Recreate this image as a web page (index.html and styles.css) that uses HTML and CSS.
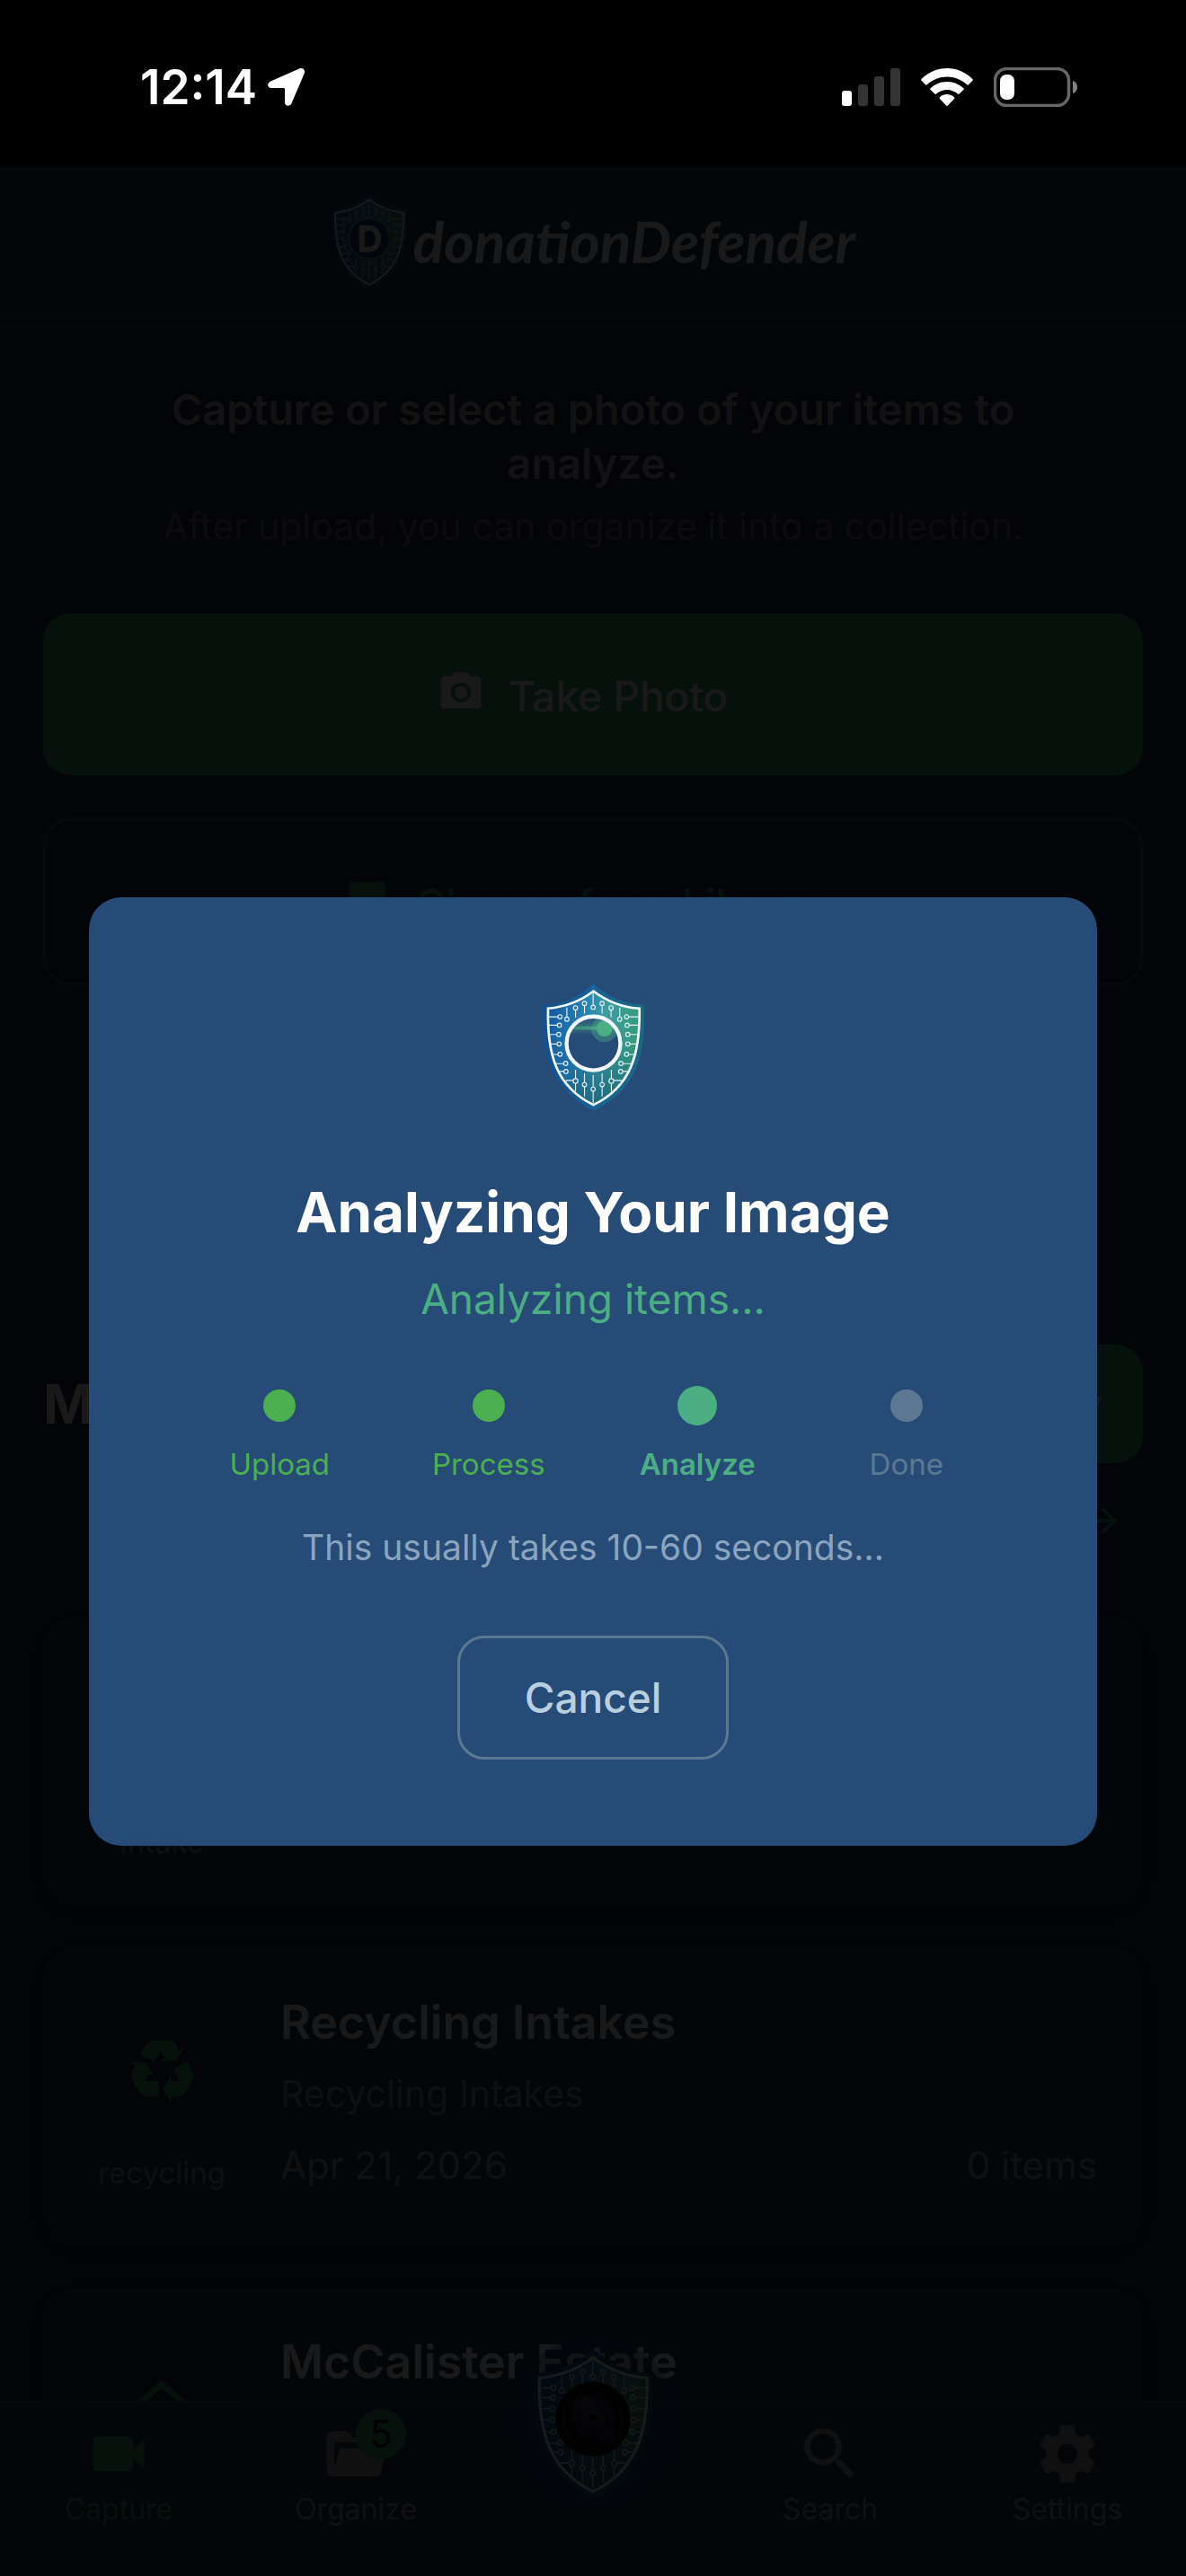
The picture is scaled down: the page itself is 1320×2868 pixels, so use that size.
FILE: index.html
```html
<!DOCTYPE html>
<html lang="en">
<head>
<meta charset="utf-8">
<meta name="viewport" content="width=device-width, initial-scale=1">
<title>donationDefender</title>
<link rel="stylesheet" href="styles.css">
</head>
<body>
<svg class="defs" aria-hidden="true">
  <defs>
    <linearGradient id="rim" x1="0" x2="1"><stop offset="0" stop-color="#14508f"/><stop offset=".5" stop-color="#17639a"/><stop offset="1" stop-color="#1a6a80"/></linearGradient>
    <linearGradient id="plate" x1="0" y1=".2" x2="1" y2=".4"><stop offset="0" stop-color="#1459a3"/><stop offset=".4" stop-color="#2784b4"/><stop offset=".6" stop-color="#3c9da4"/><stop offset="1" stop-color="#359a78"/></linearGradient>
    <linearGradient id="shade" x1="0" y1="0" x2="0" y2="1"><stop offset=".45" stop-color="#0a4a7c" stop-opacity="0"/><stop offset="1" stop-color="#0c4c70" stop-opacity=".65"/></linearGradient>
    <linearGradient id="scan" x1="0" x2="1"><stop offset="0" stop-color="#4caf84" stop-opacity=".35"/><stop offset="1" stop-color="#4caf84" stop-opacity=".9"/></linearGradient>
    <linearGradient id="scanband" x1="0" y1="0" x2="0" y2="1"><stop offset="0" stop-color="#4caf84" stop-opacity="0"/><stop offset=".6" stop-color="#4caf84" stop-opacity=".4"/><stop offset="1" stop-color="#4caf84" stop-opacity="0"/></linearGradient>
    <radialGradient id="glass" cx=".5" cy=".45"><stop offset="0" stop-color="#2a7a78"/><stop offset=".35" stop-color="#2a3540"/><stop offset=".65" stop-color="#241a38"/><stop offset="1" stop-color="#0c0c10"/></radialGradient>
    <clipPath id="ringclip"><circle cx="301" cy="280" r="83"/></clipPath>
    <mask id="hole"><rect x="100" y="60" width="400" height="470" fill="#fff"/><circle cx="301" cy="280" r="90" fill="#000"/></mask>
    <symbol id="shield" viewBox="128 80 346 426">
      <g mask="url(#hole)">
        <path fill="url(#rim)" d="M301 80C350 125 405 148 470 150C478 320 445 435 303 505C160 435 122 320 131 150C198 148 255 125 301 80Z"/>
        <path fill="url(#plate)" d="M301 105C345 138 400 160 455 163C458 320 425 425 301 486C178 425 145 320 149 163C205 158 258 138 301 105Z"/>
        <path fill="url(#shade)" d="M301 105C345 138 400 160 455 163C458 320 425 425 301 486C178 425 145 320 149 163C205 158 258 138 301 105Z"/>
        <g fill="none" stroke="#e4f2f5" stroke-width="3.4">
          <path d="M300 110V152M271 153V180M241 168V194M212 160V192M330 153V180M360 168V192M389 160V192M150 191H182M152 219H180M152 250H178M154 282H179M160 317H182M172 348H201M184 374H202M210 404H232M452 191H419M451 219H421M451 250H423M450 282H423M445 317H419M432 348H400M420 374H400M394 404H369M241 368V398M241 413V440M271 380V410M271 425V458M300 386V425M300 440V480M330 380V410M330 425V458M361 368V398M361 413V440"/>
          <path d="M206 410l6-6M398 410l-6-6"/>
          <g>
            <circle cx="300" cy="159" r="7"/><circle cx="271" cy="146" r="7"/><circle cx="241" cy="161" r="7"/><circle cx="212" cy="199" r="7"/><circle cx="330" cy="146" r="7"/><circle cx="360" cy="161" r="7"/><circle cx="389" cy="199" r="7"/>
            <circle cx="189" cy="191" r="7"/><circle cx="187" cy="219" r="7"/><circle cx="185" cy="250" r="7"/><circle cx="186" cy="282" r="7"/><circle cx="189" cy="316" r="7"/><circle cx="208" cy="347" r="7"/><circle cx="209" cy="374" r="7"/>
            <circle cx="412" cy="191" r="7"/><circle cx="414" cy="219" r="7"/><circle cx="416" cy="250" r="7"/><circle cx="416" cy="282" r="7"/><circle cx="412" cy="316" r="7"/><circle cx="393" cy="347" r="7"/><circle cx="392" cy="374" r="7"/>
            <circle cx="241" cy="406" r="8"/><circle cx="271" cy="418" r="7"/><circle cx="300" cy="433" r="7"/><circle cx="330" cy="418" r="7"/><circle cx="361" cy="406" r="8"/>
          </g>
        </g>
        <path fill="none" stroke="#f4fafc" stroke-width="8" d="M301 105C345 138 400 160 455 163C458 320 425 425 301 486C178 425 145 320 149 163C205 158 258 138 301 105Z"/>
      </g>
    </symbol>
  </defs>
</svg>

<div class="status">
  <div class="status-left">
    <span>12:14</span>
    <svg width="42" height="44" viewBox="0 0 42 44" fill="#fff"><path d="M3.200 15.500L35 1.400C39 -.3 42.300 3 40.600 7L26.500 40C25 44 19 43.500 19 39V24.500C19 23.500 18.500 23 17.500 23H4C-.8 23-1 17.500 3.200 15.500Z"/></svg>
  </div>
  <div class="status-right">
    <svg width="65" height="42" viewBox="0 0 65 42"><rect x="0" y="25" width="11" height="17" rx="3" fill="#fff"/><g fill="#333"><rect x="18" y="18" width="11" height="24" rx="3"/><rect x="36" y="9" width="11" height="33" rx="3"/><rect x="54" y="0" width="11" height="42" rx="3"/></g></svg>
    <svg width="58" height="43" viewBox="0 0 58 43" fill="#fff"><path d="M29 0C40 0 50 4.500 57.400 12C58 12.600 58 13.200 57.400 13.800L53 18.300C52.500 18.800 51.900 18.800 51.300 18.300C45 12.500 37 9.500 29 9.500S13 12.500 6.700 18.300C6.100 18.800 5.500 18.800 5 18.300L.6 13.800C0 13.200 0 12.600.6 12C8 4.500 18 0 29 0Z"/><path d="M29 15C36.500 15 42.500 17.800 47.400 22.200C48 22.800 48 23.400 47.400 24L42.600 28.500C42 29 41.500 29 40.900 28.500C37.500 25.500 33.500 24 29 24S20.500 25.500 17.100 28.500C16.500 29 16 29 15.400 28.500L10.600 24C10 23.400 10 22.800 10.600 22.200C15.500 17.800 21.500 15 29 15Z"/><path d="M29 29C32 29 34.800 30.200 37 32.200C37.600 32.800 37.500 33.400 37 34L29.900 41.500C29.300 42.100 28.700 42.100 28.100 41.500L21 34C20.500 33.400 20.400 32.800 21 32.200C23.200 30.200 26 29 29 29Z"/></svg>
    <svg width="94" height="44" viewBox="0 0 94 44"><rect x="1.500" y="1.500" width="82" height="41" rx="13" fill="none" stroke="#666" stroke-width="3.500"/><rect x="7" y="8" width="16" height="28" rx="7" fill="#fff"/><path fill="#808080" d="M88 15C91.500 16 93 19 93 22S91.500 28 88 29Z"/></svg>
  </div>
</div>

<div class="stage">
  <div class="app">
    <header class="topbar">
      <svg class="logo-mark" viewBox="128 80 346 426"><use href="#shield" x="128" y="80" width="346" height="426"/><circle cx="301" cy="280" r="92" fill="#123f78" stroke="#5fae9c" stroke-width="10"/><path d="M268 232H300C355 232 355 328 300 328H268Z" fill="none" stroke="#fff" stroke-width="24"/></svg>
      <span class="wordmark">donationDefender</span>
    </header>

    <main class="content">
      <section class="intro">
        <h1>Capture or select a photo of your items to analyze.</h1>
        <p>After upload, you can organize it into a collection.</p>
      </section>
      <div class="actions">
        <button class="btn btn-primary" type="button"><svg class="btn-icon" viewBox="0 0 24 24"><path fill-rule="evenodd" d="M9 2L7.200 4H4C2.900 4 2 4.900 2 6V18C2 19.100 2.900 20 4 20H20C21.100 20 22 19.100 22 18V6C22 4.900 21.100 4 20 4H16.800L15 2ZM12 7A5 5 0 1 1 12 17A5 5 0 1 1 12 7ZM12 8.800A3.200 3.200 0 1 0 12 15.200A3.200 3.200 0 1 0 12 8.800Z"/></svg>Take Photo</button>
        <button class="btn btn-outline" type="button"><svg class="btn-icon" viewBox="0 0 24 24"><path d="M21 19V5C21 3.900 20.100 3 19 3H5C3.900 3 3 3.900 3 5V19C3 20.100 3.900 21 5 21H19C20.100 21 21 20.100 21 19M8.500 13.500L11 16.500L14.500 12L19 18H5L8.500 13.500Z"/></svg>Choose from Library</button>
      </div>

      <section class="collections">
        <div class="collections-head">
          <h2>My Collections</h2>
          <button class="btn-new" type="button">+ New</button>
        </div>
        <a class="more" href="#all">View all <svg width="36" height="32" viewBox="0 0 36 32"><path d="M2 16H33M20 4L33 16L20 28" fill="none" stroke="currentColor" stroke-width="4" stroke-linecap="round" stroke-linejoin="round"/></svg></a>

        <div class="cards">
          <article class="card">
            <div class="tag"><div class="thumb"></div><span>Intake</span></div>
          </article>
          <article class="card">
            <div class="tag">
              <div class="thumb"><svg viewBox="0 0 24 24"><path d="M21.820,15.420L19.320,19.750C18.830,20.610 17.920,21.060 17,21H15V23L12.500,18.500L15,14V16H17.820L15.600,12.150L19.930,9.650L21.730,12.770C22.250,13.540 22.320,14.570 21.820,15.420M9.210,3.060H14.210C15.190,3.060 16.040,3.630 16.450,4.450L17.450,6.190L19.180,5.190L16.540,9.600L11.390,9.690L13.120,8.690L11.710,6.240L9.500,10.090L5.160,7.590L6.960,4.470C7.370,3.640 8.220,3.060 9.210,3.060M5.050,19.760L2.550,15.430C2.060,14.580 2.130,13.560 2.640,12.790L3.640,11.060L1.910,10.060L7.050,10.140L9.700,14.560L7.970,13.560L6.560,16H11V21H7.400C6.470,21.070 5.550,20.610 5.050,19.760Z"/></svg></div>
              <span>recycling</span>
            </div>
            <div class="info">
              <h3>Recycling Intakes</h3>
              <p class="desc">Recycling Intakes</p>
              <div class="meta"><span>Apr 21, 2026</span><span>0 items</span></div>
            </div>
          </article>
          <article class="card">
            <div class="tag">
              <div class="thumb"><svg viewBox="0 0 24 24"><path d="M12 5.690L17 10.190V18H15V12H9V18H7V10.190L12 5.690M12 3L2 12H5V20H11V14H13V20H19V12H22L12 3Z"/></svg></div>
            </div>
            <div class="info"><h3>McCalister Estate</h3></div>
          </article>
        </div>
      </section>
    </main>

    <nav class="tabs">
      <a class="tab active" href="#capture"><svg viewBox="0 0 24 24"><path d="M17 10.500V7C17 6.450 16.550 6 16 6H4C3.450 6 3 6.450 3 7V17C3 17.550 3.450 18 4 18H16C16.550 18 17 17.550 17 17V13.500L21 17.500V6.500L17 10.500Z"/></svg>Capture</a>
      <a class="tab" href="#organize"><span class="icon-wrap"><svg viewBox="0 0 24 24"><path d="M3.800 4H8.800L11 6.200H19.500C20.600 6.200 21.400 7 21.400 8H4.500V17L6.300 10H22.500L21 18.500C20.800 19.400 20.200 20 19.300 20H3.800C2.700 20 1.800 19.100 1.800 18V6C1.800 4.900 2.700 4 3.800 4Z"/></svg><span class="badge">5</span></span>Organize</a>
      <a class="tab-center" href="#camera" aria-label="Camera"><svg viewBox="128 80 346 426"><use href="#shield" x="128" y="80" width="346" height="426"/><circle cx="301" cy="280" r="106" fill="#0c0c0e"/><circle cx="301" cy="280" r="84" fill="none" stroke="#2b2b33" stroke-width="5"/><circle cx="301" cy="280" r="78" fill="url(#glass)"/><circle cx="301" cy="275" r="50" fill="none" stroke="#34404a" stroke-width="4"/><ellipse cx="275" cy="235" rx="34" ry="22" fill="#8a6a80" opacity=".35"/><ellipse cx="345" cy="325" rx="28" ry="16" fill="#3a2c8c" opacity=".6" transform="rotate(-35 345 325)"/><circle cx="301" cy="275" r="12" fill="#070709"/></svg></a>
      <a class="tab" href="#search"><svg viewBox="0 0 24 24"><path d="M9.500 3A6.500 6.500 0 0 1 16 9.500C16 11.110 15.410 12.590 14.440 13.730L14.710 14H15.500L20.500 19L19 20.500L14 15.500V14.710L13.730 14.440C12.590 15.410 11.110 16 9.500 16A6.500 6.500 0 0 1 9.500 3M9.500 5C7 5 5 7 5 9.500S7 14 9.500 14S14 12 14 9.500S12 5 9.500 5Z"/></svg>Search</a>
      <a class="tab" href="#settings"><svg viewBox="0 0 24 24"><path d="M12 15.500A3.500 3.500 0 1 1 12 8.500A3.500 3.500 0 0 1 12 15.500M19.430 12.970C19.470 12.650 19.500 12.330 19.500 12S19.470 11.340 19.430 11L21.540 9.370C21.730 9.220 21.780 8.950 21.660 8.730L19.660 5.270C19.540 5.050 19.270 4.960 19.050 5.050L16.560 6.050C16.040 5.660 15.500 5.320 14.870 5.070L14.500 2.420C14.460 2.180 14.250 2 14 2H10C9.750 2 9.540 2.180 9.500 2.420L9.130 5.070C8.500 5.320 7.960 5.660 7.440 6.050L4.950 5.050C4.730 4.960 4.460 5.050 4.340 5.270L2.340 8.730C2.210 8.950 2.270 9.220 2.460 9.370L4.570 11C4.530 11.340 4.500 11.670 4.500 12S4.530 12.650 4.570 12.970L2.460 14.630C2.270 14.780 2.210 15.050 2.340 15.270L4.340 18.730C4.460 18.950 4.730 19.030 4.950 18.950L7.440 17.940C7.960 18.340 8.500 18.680 9.130 18.930L9.500 21.580C9.540 21.820 9.750 22 10 22H14C14.250 22 14.460 21.820 14.500 21.580L14.870 18.930C15.500 18.670 16.040 18.340 16.560 17.940L19.050 18.950C19.270 19.030 19.540 18.950 19.660 18.730L21.660 15.270C21.780 15.050 21.730 14.780 21.540 14.630L19.430 12.970Z"/></svg>Settings</a>
    </nav>
  </div>

  <div class="backdrop">
    <section class="modal" role="dialog" aria-modal="true" aria-labelledby="modal-title">
      <svg class="modal-mark" viewBox="128 80 346 426">
        <use href="#shield" x="128" y="80" width="346" height="426"/>
        <g clip-path="url(#ringclip)">
          <rect x="218" y="190" width="166" height="62" fill="url(#scanband)"/>
          <rect x="218" y="223" width="120" height="11" fill="url(#scan)"/>
          <circle cx="338" cy="232" r="44" fill="#4caf84" opacity=".4"/>
          <circle cx="338" cy="230" r="27" fill="#4caf84"/>
        </g>
        <circle cx="301" cy="280" r="90" fill="none" stroke="#f2f7fa" stroke-width="13"/>
      </svg>
      <h2 class="modal-title" id="modal-title">Analyzing Your Image</h2>
      <p class="modal-status">Analyzing items...</p>
      <ol class="steps">
        <li class="step done"><i class="dot"></i>Upload</li>
        <li class="step done"><i class="dot"></i>Process</li>
        <li class="step current"><i class="dot"></i>Analyze</li>
        <li class="step"><i class="dot"></i>Done</li>
      </ol>
      <p class="hint">This usually takes 10-60 seconds...</p>
      <button class="cancel" type="button">Cancel</button>
    </section>
  </div>
</div>
</body>
</html>
```
FILE: styles.css
```css
:root {
  --green: #46a878;
  --bar: #1a3c62;
  --page: #1e2850;
  --muted: #8c96a5;
}

* { box-sizing: border-box; margin: 0; padding: 0; }

body {
  display: flex;
  flex-direction: column;
  height: 100vh;
  background: #000;
  color: #fff;
  font-family: Inter, "Liberation Sans", sans-serif;
  font-size: 42px;
  line-height: 60px;
}

button { font: inherit; cursor: pointer; }
a { color: inherit; text-decoration: none; }
svg { display: block; flex: none; }
.defs { position: absolute; width: 0; height: 0; }

/* Device status bar */
.status {
  flex: none;
  display: flex;
  justify-content: space-between;
  align-items: center;
  height: 186px;
  padding: 8px 120px 0 156px;
}
.status-left { display: flex; align-items: center; gap: 12px; font-size: 53px; font-weight: 600; }
.status-right { display: flex; align-items: center; gap: 23px; }

/* Screen and the dimmed layer share one grid cell */
.stage { flex: 1; min-height: 0; display: grid; grid-template: minmax(0, 1fr) / minmax(0, 1fr); }
.app, .backdrop { grid-area: 1 / 1; }
.app { display: flex; flex-direction: column; min-height: 0; background: var(--page); }

.topbar {
  flex: none;
  display: flex;
  align-items: center;
  justify-content: center;
  gap: 6px;
  height: 168px;
  background: var(--bar);
  border-bottom: 3px solid #1e4660;
}
.logo-mark { width: 86px; height: 106px; }
.wordmark { font-family: Lato, sans-serif; font-size: 64px; font-weight: 700; font-style: italic; }

.content { flex: 1; min-height: 0; overflow: hidden; padding: 72px 48px 0; }
.intro { padding: 0 96px; text-align: center; }
.intro h1 { font-size: 47px; font-weight: 600; color: #b4b4b4; }
.intro p { margin: 10px -48px 0; font-size: 41px; color: #6e7378; }

.actions { display: flex; flex-direction: column; gap: 48px; margin-top: 67px; }
.btn {
  display: flex;
  align-items: center;
  justify-content: center;
  gap: 26px;
  height: 180px;
  padding: 4px 24px 0 0;
  border: 0;
  border-radius: 30px;
  font-size: 46px;
  font-weight: 500;
}
.btn-icon { width: 54px; height: 54px; margin-bottom: 8px; fill: currentColor; }
.btn-primary { background: var(--green); color: #fff; }
.btn-outline { height: 186px; background: none; border: 3px solid #464f69; color: var(--green); }

.collections { margin-top: 400px; }
.collections-head { display: flex; justify-content: space-between; align-items: center; }
.collections-head h2 { font-size: 60px; font-weight: 700; }
.btn-new {
  height: 132px;
  padding: 0 46px;
  border: 0;
  border-radius: 30px;
  background: var(--green);
  color: #fff;
  font-size: 42px;
  font-weight: 600;
}
.more { display: flex; align-items: center; justify-content: flex-end; gap: 12px; margin: 34px 28px 77px 0; color: var(--green); }

.cards { display: flex; flex-direction: column; gap: 46px; }
.card {
  display: flex;
  gap: 51px;
  padding: 48px;
  border: 3px solid #1c3e60;
  border-radius: 36px;
  background: var(--bar);
  box-shadow: 0 6px 12px rgba(0, 0, 0, .2);
}
.tag { flex: none; display: flex; flex-direction: column; align-items: center; gap: 12px; width: 162px; font-size: 33px; line-height: 40px; color: var(--muted); }
.thumb { display: grid; place-items: center; width: 162px; height: 168px; border-radius: 30px; background: var(--page); }
.thumb svg { width: 84px; height: 84px; fill: var(--green); }
.info { flex: 1; padding-bottom: 8px; color: var(--muted); }
.info h3 { margin-bottom: 16px; font-size: 52px; font-weight: 600; line-height: 66px; color: #fff; }
.desc { margin-bottom: 20px; font-size: 41px; }
.meta { display: flex; justify-content: space-between; color: #a0a0a5; }

/* Bottom tab bar */
.tabs {
  flex: none;
  display: grid;
  grid-template-columns: repeat(5, 1fr);
  height: 195px;
  padding-top: 18px;
  background: var(--bar);
  border-top: 3px solid #285070;
}
.tab { display: flex; flex-direction: column; align-items: center; gap: 4px; font-size: 32px; line-height: 40px; color: #a0a0a5; }
.tab svg { width: 76px; height: 76px; fill: currentColor; }
.tab.active { color: var(--green); }
.icon-wrap { position: relative; }
.badge {
  position: absolute;
  top: -12px;
  right: -18px;
  width: 56px;
  height: 56px;
  border-radius: 50%;
  background: var(--green);
  color: #000;
  font-size: 42px;
  line-height: 56px;
  text-align: center;
}
.tab-center {
  justify-self: center;
  display: grid;
  place-items: center;
  width: 192px;
  height: 192px;
  margin-top: -92px;
  border-radius: 50%;
  background: rgba(20, 60, 80, .3);
}
.tab-center svg { width: 136px; height: 167px; }

/* Progress dialog */
.backdrop { position: relative; display: grid; place-items: center; background: rgba(0, 0, 0, .9); }
.modal {
  display: flex;
  flex-direction: column;
  align-items: center;
  width: 85%;
  padding: 96px;
  border-radius: 36px;
  background: #274b77;
}
.modal-mark { width: 115px; height: 142px; }
.modal-title { margin-top: 74px; font-size: 62px; font-weight: 700; line-height: 78px; }
.modal-status { margin-top: 27px; font-size: 46px; color: #4caf84; }
.steps { display: grid; grid-template-columns: repeat(4, 1fr); width: 100%; margin-top: 67px; list-style: none; }
.step {
  display: grid;
  grid-template-rows: 44px 40px;
  gap: 23px;
  place-items: center;
  font-size: 33px;
  line-height: 40px;
  color: #5c7892;
}
.dot { width: 36px; height: 36px; border-radius: 50%; background: currentColor; }
.done { color: #4caf50; }
.current { color: #4caf84; font-weight: 600; }
.current .dot { width: 44px; height: 44px; }
.hint { margin-top: 49px; font-size: 39px; line-height: 48px; color: #8ba5be; }
.cancel {
  height: 138px;
  margin-top: 74px;
  padding: 0 72px;
  border: 3px solid #5c7892;
  border-radius: 30px;
  background: none;
  color: #b8cfe0;
  font-size: 46px;
  font-weight: 500;
}
```
